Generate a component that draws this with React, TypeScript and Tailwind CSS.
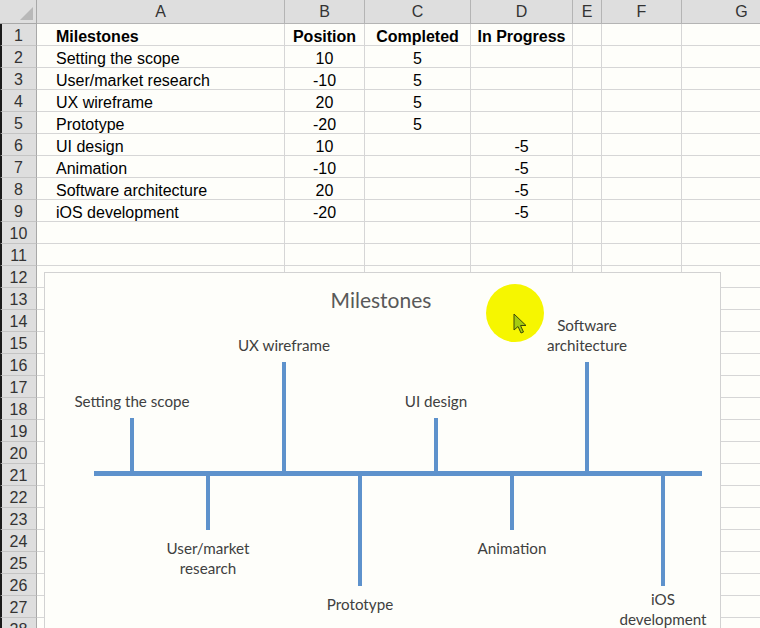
import React from 'react'

const cols = [
  { key: 'A', w: 'w-[248px]' },
  { key: 'B', w: 'w-[80px]' },
  { key: 'C', w: 'w-[106px]' },
  { key: 'D', w: 'w-[102px]' },
  { key: 'E', w: 'w-[29px]' },
  { key: 'F', w: 'w-[80px]' },
  { key: 'G', w: 'w-[120px]' },
]

const rows: (string | number)[][] = [
  ['Milestones', 'Position', 'Completed', 'In Progress'],
  ['Setting the scope', 10, 5, ''],
  ['User/market research', -10, 5, ''],
  ['UX wireframe', 20, 5, ''],
  ['Prototype', -20, 5, ''],
  ['UI design', 10, '', -5],
  ['Animation', -10, '', -5],
  ['Software architecture', 20, '', -5],
  ['iOS development', -20, '', -5],
]

// chart data: x of stem, end y of stem, label lines, label center y
const stems = [
  { x: 132, y: 418, lines: ['Setting the scope'], ly: 401 },
  { x: 208, y: 530, lines: ['User/market', 'research'], ly: 548 },
  { x: 284, y: 362, lines: ['UX wireframe'], ly: 345 },
  { x: 360, y: 586, lines: ['Prototype'], ly: 604 },
  { x: 436, y: 418, lines: ['UI design'], ly: 401 },
  { x: 512, y: 530, lines: ['Animation'], ly: 548 },
  { x: 587, y: 362, lines: ['Software', 'architecture'], ly: 325 },
  { x: 663, y: 586, lines: ['iOS', 'development'], ly: 599 },
]

const AXIS = 473

function Chart() {
  return (
    <div className="absolute left-[44px] top-[272px] h-[370px] w-[677px] border border-[#d2d2d2] bg-[#fefefa]">
      <svg width="677" height="370" className="block">
        <g transform="translate(-45,-273)" fontFamily="Lato, 'Open Sans', sans-serif">
          <text x="381" y="299" textAnchor="middle" dominantBaseline="central" fontSize="21" fill="#595959">
            Milestones
          </text>
          <rect x="94" y={AXIS - 2} width="608" height="5" fill="#5e92cc" />
          {stems.map((s) => (
            <rect
              key={s.x}
              x={s.x - 2}
              y={Math.min(s.y, AXIS)}
              width="4"
              height={Math.abs(s.y - AXIS)}
              fill="#5e92cc"
            />
          ))}
          {stems.map((s) =>
            s.lines.map((l, i) => (
              <text
                key={s.x + l}
                x={s.x}
                y={s.ly + i * 20}
                textAnchor="middle"
                dominantBaseline="central"
                fontSize="15.2"
                fill="#404040"
              >
                {l}
              </text>
            ))
          )}
          <circle cx="515" cy="313" r="29" fill="#f6f600" />
          <path
            d="M514 314 L514 330 L518 326.5 L521 333 L523.5 332 L520.5 325.5 L526 325.5 Z"
            fill="#a4cc10"
            stroke="#3d4a08"
            strokeWidth="1"
          />
        </g>
      </svg>
    </div>
  )
}

export default function App() {
  const all = Array.from({ length: 28 }, (_, i) => rows[i] ?? [])
  return (
    <div className="relative h-[628px] w-[760px] overflow-hidden bg-[#fefefa] font-['Liberation_Sans',Arial,sans-serif] text-black">
      <div className="flex h-[24px] bg-[#dedede] text-[16px] text-[#333]">
        <div className="relative w-[37px] shrink-0 border-r border-b border-[#a8a8a8]">
          <div className="absolute right-[3px] bottom-[3px] h-0 w-0 border-l-[13px] border-t-[13px] border-l-transparent border-t-transparent border-b-[13px] border-b-[#b8b8b8] border-r-0" />
        </div>
        {cols.map((c) => (
          <div
            key={c.key}
            className={`${c.w} flex shrink-0 items-center justify-center border-r border-b border-[#b4b4b4] pt-[1px]`}
          >
            {c.key}
          </div>
        ))}
      </div>
      {all.map((r, i) => (
        <div key={i} className="flex h-[22px] text-[16px] leading-[22px]">
          <div className="w-[37px] shrink-0 border-l-2 border-r border-b border-l-[#1a1a1a] border-r-[#a8a8a8] border-b-[#c4c4c4] bg-[#dedede] pt-[1px] pr-[1px] text-center text-[16px] text-[#333]">
            {i + 1}
          </div>
          <div className={`w-[248px] shrink-0 border-r border-b border-[#d6d6d6] pl-[19px] pt-[2px] ${i === 0 ? 'font-bold' : ''}`}>
            {r[0] ?? ''}
          </div>
          <div className={`w-[80px] shrink-0 border-r border-b border-[#d6d6d6] pt-[2px] text-center ${i === 0 ? 'font-bold' : ''}`}>
            {r[1] ?? ''}
          </div>
          <div className={`w-[106px] shrink-0 border-r border-b border-[#d6d6d6] pt-[2px] text-center ${i === 0 ? 'font-bold' : ''}`}>
            {r[2] ?? ''}
          </div>
          <div className={`w-[102px] shrink-0 border-r border-b border-[#d6d6d6] pt-[2px] text-center ${i === 0 ? 'font-bold' : ''}`}>
            {r[3] ?? ''}
          </div>
          <div className="w-[29px] shrink-0 border-r border-b border-[#d6d6d6]" />
          <div className="w-[80px] shrink-0 border-r border-b border-[#d6d6d6]" />
          <div className="w-[120px] shrink-0 border-r border-b border-[#d6d6d6]" />
        </div>
      ))}
      <Chart />
    </div>
  )
}
